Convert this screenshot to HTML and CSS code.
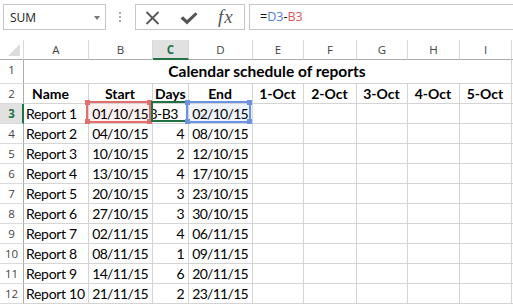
FILE: index.html
```html
<!DOCTYPE html>
<html>
<head>
<meta charset="utf-8">
<link rel="stylesheet" href="styles.css">
</head>
<body>
<div class="fbar">
  <div class="namebox"><span>SUM</span><span class="nb-arrow"></span></div>
  <div class="grip"><i></i><i></i><i></i></div>
  <div class="fxbox">
    <svg class="ic-x" width="15" height="14" viewBox="0 0 15 14"><path d="M1.5 1 L13.5 13 M13.5 1 L1.5 13" stroke="#555" stroke-width="1.8" fill="none"/></svg>
    <svg class="ic-ok" width="18" height="13" viewBox="0 0 18 13"><path d="M0.5 6.5 L3 4.2 L7 8 L15.5 0.2 L17.5 2.3 L7 12.5 Z" fill="#555"/></svg>
    <span class="fx">fx</span>
  </div>
  <div class="formula">=<span class="ref-d">D3</span>-<span class="ref-b">B3</span></div>
</div>

<div class="sheet">
  <div class="corner"><svg width="23" height="19" viewBox="0 0 23 19"><polygon points="8,16 20,16 20,4" fill="#dcdcdc"/></svg></div>
  <div class="ch">A</div><div class="ch">B</div><div class="ch sel">C</div><div class="ch">D</div><div class="ch">E</div><div class="ch">F</div><div class="ch">G</div><div class="ch">H</div><div class="ch">I</div><div class="ch last"></div>

  <div class="rh">1</div><div class="c title">Calendar schedule of reports</div><div class="c"></div>

  <div class="rh">2</div><div class="c h name">Name</div><div class="c h">Start</div><div class="c h">Days</div><div class="c h">End</div><div class="c h">1-Oct</div><div class="c h">2-Oct</div><div class="c h">3-Oct</div><div class="c h">4-Oct</div><div class="c h">5-Oct</div><div class="c"></div>

  <div class="rh sel">3</div><div class="c">Report 1</div><div class="c n refcell fill-b">01/10/15<span class="hl hl-b"><i class="sq tl"></i><i class="sq tr"></i><i class="sq bl"></i><i class="sq br"></i></span></div><div class="c edit"><span class="edit-clip">=D3-B3</span><span class="active"></span></div><div class="c n refcell fill-d">02/10/15<span class="hl hl-d"><i class="sq tl"></i><i class="sq tr"></i><i class="sq bl"></i><i class="sq br"></i></span></div><div class="c"></div><div class="c"></div><div class="c"></div><div class="c"></div><div class="c"></div><div class="c"></div>

  <div class="rh">4</div><div class="c">Report 2</div><div class="c n">04/10/15</div><div class="c n">4</div><div class="c n">08/10/15</div><div class="c"></div><div class="c"></div><div class="c"></div><div class="c"></div><div class="c"></div><div class="c"></div>

  <div class="rh">5</div><div class="c">Report 3</div><div class="c n">10/10/15</div><div class="c n">2</div><div class="c n">12/10/15</div><div class="c"></div><div class="c"></div><div class="c"></div><div class="c"></div><div class="c"></div><div class="c"></div>

  <div class="rh">6</div><div class="c">Report 4</div><div class="c n">13/10/15</div><div class="c n">4</div><div class="c n">17/10/15</div><div class="c"></div><div class="c"></div><div class="c"></div><div class="c"></div><div class="c"></div><div class="c"></div>

  <div class="rh">7</div><div class="c">Report 5</div><div class="c n">20/10/15</div><div class="c n">3</div><div class="c n">23/10/15</div><div class="c"></div><div class="c"></div><div class="c"></div><div class="c"></div><div class="c"></div><div class="c"></div>

  <div class="rh">8</div><div class="c">Report 6</div><div class="c n">27/10/15</div><div class="c n">3</div><div class="c n">30/10/15</div><div class="c"></div><div class="c"></div><div class="c"></div><div class="c"></div><div class="c"></div><div class="c"></div>

  <div class="rh">9</div><div class="c">Report 7</div><div class="c n">02/11/15</div><div class="c n">4</div><div class="c n">06/11/15</div><div class="c"></div><div class="c"></div><div class="c"></div><div class="c"></div><div class="c"></div><div class="c"></div>

  <div class="rh">10</div><div class="c">Report 8</div><div class="c n">08/11/15</div><div class="c n">1</div><div class="c n">09/11/15</div><div class="c"></div><div class="c"></div><div class="c"></div><div class="c"></div><div class="c"></div><div class="c"></div>

  <div class="rh">11</div><div class="c">Report 9</div><div class="c n">14/11/15</div><div class="c n">6</div><div class="c n">20/11/15</div><div class="c"></div><div class="c"></div><div class="c"></div><div class="c"></div><div class="c"></div><div class="c"></div>

  <div class="rh">12</div><div class="c">Report 10</div><div class="c n">21/11/15</div><div class="c n">2</div><div class="c n">23/11/15</div><div class="c"></div><div class="c"></div><div class="c"></div><div class="c"></div><div class="c"></div><div class="c"></div>
</div>
</body>
</html>
```

FILE: styles.css
```css
* { box-sizing: border-box; }
html, body { margin: 0; padding: 0; }
body {
  width: 513px;
  height: 305px;
  overflow: hidden;
  background: #fff;
  font-family: Lato, "Open Sans", sans-serif;
  color: #000;
}

/* formula bar */
.fbar {
  display: flex;
  height: 26px;
  margin-top: 4px;
  margin-bottom: 10px;
}
.namebox {
  margin-left: 3px;
  width: 103px;
  border: 1px solid #c6c6c6;
  display: flex;
  align-items: center;
  justify-content: space-between;
  padding: 0 5px 0 6px;
  font-family: "Open Sans", sans-serif;
  font-size: 12px;
  color: #222;
}
.nb-arrow {
  width: 0;
  height: 0;
  border-left: 3.5px solid transparent;
  border-right: 3.5px solid transparent;
  border-top: 4px solid #777;
  margin-top: 1px;
}
.grip {
  width: 29px;
  display: flex;
  flex-direction: column;
  align-items: center;
  justify-content: center;
  gap: 2px;
  padding-right: 1px;
}
.grip i {
  display: block;
  width: 2px;
  height: 2px;
  background: #a8a8a8;
}
.fxbox {
  width: 110px;
  border: 1px solid #c6c6c6;
  display: flex;
  align-items: center;
  padding-left: 9px;
}
.ic-x { margin-top: 1px; }
.ic-ok { margin-left: 20px; margin-top: 2px; }
.fx {
  margin-left: 20px;
  font-family: "Liberation Serif", serif;
  font-style: italic;
  font-size: 19px;
  letter-spacing: 1px;
  color: #555;
  line-height: 1;
  margin-top: -2px;
}
.formula {
  flex: 1;
  margin-left: 4px;
  border: 1px solid #c6c6c6;
  border-right: none;
  padding-left: 10px;
  font-family: "Open Sans", sans-serif;
  font-size: 12.5px;
  line-height: 23px;
  color: #000;
}
.ref-d { color: #4f7fe0; }
.ref-b { color: #e0555c; }

/* sheet */
.sheet {
  display: grid;
  grid-template-columns: 24px 65px 64px 36px 64px 51px 53px 51px 52px 52px 1fr;
  grid-template-rows: 20px 24px repeat(11, 20px);
}
.corner {
  border-right: 1px solid #dadada;
  border-bottom: 1px solid #ababab;
}
.corner svg { display: block; }
.ch {
  border-right: 1px solid #dadada;
  border-bottom: 1px solid #ababab;
  text-align: center;
  font-family: "Open Sans", sans-serif;
  font-size: 11.5px;
  line-height: 19px;
  color: #444;
}
.ch.sel {
  background: #e1e1e1;
  color: #217346;
  font-weight: bold;
  border-bottom: 2px solid #217346;
}
.ch.last { border-right: none; }
.rh {
  border-right: 1px solid #ababab;
  border-bottom: 1px solid #dadada;
  text-align: center;
  font-family: "Open Sans", sans-serif;
  font-size: 11.5px;
  line-height: 20px;
  color: #444;
}
.rh.sel {
  background: #e1e1e1;
  color: #217346;
  font-weight: bold;
  border-right: 2px solid #217346;
  padding-left: 1px;
}
.c {
  border-right: 1px solid #d4d4d4;
  border-bottom: 1px solid #d4d4d4;
  font-size: 14px;
  letter-spacing: -0.3px;
  line-height: 19px;
  padding: 0 3px 0 2px;
  white-space: nowrap;
}
.c.title {
  grid-column: span 9;
  text-align: center;
  font-weight: bold;
  font-size: 15.5px;
  letter-spacing: 0;
  line-height: 23px;
}
.c.h { text-align: center; font-weight: bold; letter-spacing: 0; }
.c.h.name { padding-right: 13px; }
.c.n { text-align: right; padding-right: 4px; letter-spacing: -0.7px; }

.refcell { position: relative; }
.fill-b { background: #fdf1f1; }
.fill-d { background: #eff3fc; }
.hl {
  position: absolute;
  left: -3px;
  top: -3px;
  width: 65px;
  height: 22px;
  border: 2px solid;
}
.hl-b { border-color: #e46d6d; color: #e46d6d; }
.hl-d { border-color: #6b92e3; color: #6b92e3; }
.sq {
  position: absolute;
  width: 5px;
  height: 5px;
  background: currentColor;
}
.sq.tl { left: -3px; top: -3px; }
.sq.tr { right: -3px; top: -3px; }
.sq.bl { left: -3px; bottom: -3px; }
.sq.br { right: -3px; bottom: -3px; }

.c.edit {
  position: relative;
  padding: 0;
  background: #fff;
  letter-spacing: -0.5px;
}
.edit-clip {
  display: flex;
  justify-content: flex-end;
  overflow: hidden;
  height: 100%;
  padding-right: 10px;
}
.active {
  position: absolute;
  left: -2px;
  top: -3px;
  width: 37px;
  height: 21px;
  border: 2px solid #217346;
}
```
